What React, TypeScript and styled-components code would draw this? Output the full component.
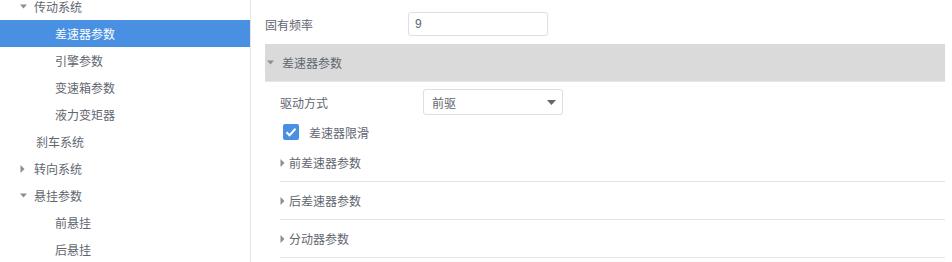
import styled, { createGlobalStyle } from 'styled-components';

const GlobalStyle = createGlobalStyle`
  body {
    margin: 0;
    font-family: "Liberation Sans", "Noto Sans CJK SC", sans-serif;
    font-size: 12px;
    color: #5f6670;
    background: #fff;
  }
`;

type TreeItem = {
  label: string;
  level: number;
  caret?: 'open' | 'closed';
  active?: boolean;
};

const tree: TreeItem[] = [
  { label: '传动系统', level: 1, caret: 'open' },
  { label: '差速器参数', level: 2, active: true },
  { label: '引擎参数', level: 2 },
  { label: '变速箱参数', level: 2 },
  { label: '液力变矩器', level: 2 },
  { label: '刹车系统', level: 1 },
  { label: '转向系统', level: 1, caret: 'closed' },
  { label: '悬挂参数', level: 1, caret: 'open' },
  { label: '前悬挂', level: 2 },
  { label: '后悬挂', level: 2 },
];

const sections = ['前差速器参数', '后差速器参数', '分动器参数'];

const Caret = ({ open, color }: { open: boolean; color: string }) =>
  open ? (
    <svg width="7" height="5" viewBox="0 0 7 5">
      <path d="M0 0.5h7L3.5 4.5z" fill={color} />
    </svg>
  ) : (
    <svg width="5" height="8" viewBox="0 0 5 8">
      <path d="M0.5 0v8L4.5 4z" fill={color} />
    </svg>
  );

const App = () => {
  return (
    <Page>
      <GlobalStyle />
      <Sidebar>
        <TreeList>
          {tree.map((item) => (
            <TreeRow
              key={item.label}
              level={item.level}
              active={item.active}
              leaf={!item.caret}
            >
              <CaretSlot>
                {item.caret && (
                  <Caret open={item.caret === 'open'} color="#8a8f96" />
                )}
              </CaretSlot>
              {item.label}
            </TreeRow>
          ))}
        </TreeList>
      </Sidebar>
      <Content>
        <FieldRow>
          <Label>固有频率</Label>
          <TextInput defaultValue="9" />
        </FieldRow>
        <GroupHeader>
          <Caret open color="#8a8f96" />
          <span>差速器参数</span>
        </GroupHeader>
        <GroupBody>
          <FieldRow>
            <Label>驱动方式</Label>
            <Select>
              <span>前驱</span>
              <svg width="9" height="5" viewBox="0 0 9 5">
                <path d="M0 0h9L4.5 5z" fill="#666" />
              </svg>
            </Select>
          </FieldRow>
          <CheckRow>
            <CheckBox>
              <svg width="12" height="10" viewBox="0 0 12 10">
                <path
                  d="M1.5 5.2l3 3 6-6.5"
                  stroke="#fff"
                  strokeWidth="2"
                  fill="none"
                />
              </svg>
            </CheckBox>
            差速器限滑
          </CheckRow>
          {sections.map((s) => (
            <Section key={s}>
              <Caret open={false} color="#8a8f96" />
              {s}
            </Section>
          ))}
        </GroupBody>
      </Content>
    </Page>
  );
};

const Page = styled.div`
  display: flex;
  height: 262px;
  overflow: hidden;
`;

const Sidebar = styled.div`
  width: 250px;
  flex-shrink: 0;
  border-right: 1px solid #e3e3e3;
  overflow: hidden;
`;

const TreeList = styled.div`
  margin-top: -7px;
`;

const TreeRow = styled.div<{ level: number; active?: boolean; leaf?: boolean }>`
  display: flex;
  align-items: center;
  height: 27px;
  padding-left: ${({ level, leaf }) => (level === 1 ? (leaf ? 22 : 20) : 41)}px;
  background: ${({ active }) => (active ? '#4a90e2' : 'transparent')};
  color: ${({ active }) => (active ? '#fff' : '#5f6670')};
`;

const CaretSlot = styled.span`
  display: inline-flex;
  align-items: center;
  width: 14px;
`;

const Content = styled.div`
  flex: 1;
  padding: 12px 7px 0 14px;
`;

const FieldRow = styled.div`
  display: flex;
  align-items: center;
`;

const Label = styled.span`
  width: 143px;
  flex-shrink: 0;
`;

const TextInput = styled.input`
  box-sizing: border-box;
  width: 140px;
  height: 24px;
  border: 1px solid #dcdfe3;
  border-radius: 3px;
  padding: 0 6px;
  font: inherit;
  color: #5f6670;
  outline: none;
`;

const GroupHeader = styled.div`
  display: flex;
  align-items: center;
  gap: 8px;
  height: 37px;
  margin-top: 8px;
  padding-left: 2px;
  background: #dadada;
  border-bottom: 1px solid #e6e6e6;
`;

const GroupBody = styled.div`
  padding: 7px 0 0 15px;
`;

const Select = styled.div`
  box-sizing: border-box;
  width: 140px;
  height: 26px;
  border: 1px solid #dcdfe3;
  border-radius: 3px;
  padding: 0 6px 0 8px;
  display: flex;
  align-items: center;
  justify-content: space-between;
`;

const CheckRow = styled.div`
  display: flex;
  align-items: center;
  gap: 10px;
  height: 24px;
  margin-top: 5px;
  padding-left: 3px;
`;

const CheckBox = styled.span`
  width: 16px;
  height: 16px;
  border-radius: 2px;
  background: #4a90e2;
  display: inline-flex;
  align-items: center;
  justify-content: center;
`;

const Section = styled.div`
  display: flex;
  align-items: center;
  gap: 4px;
  height: 37px;
  border-bottom: 1px solid #e3e3e3;
`;

export default App;
